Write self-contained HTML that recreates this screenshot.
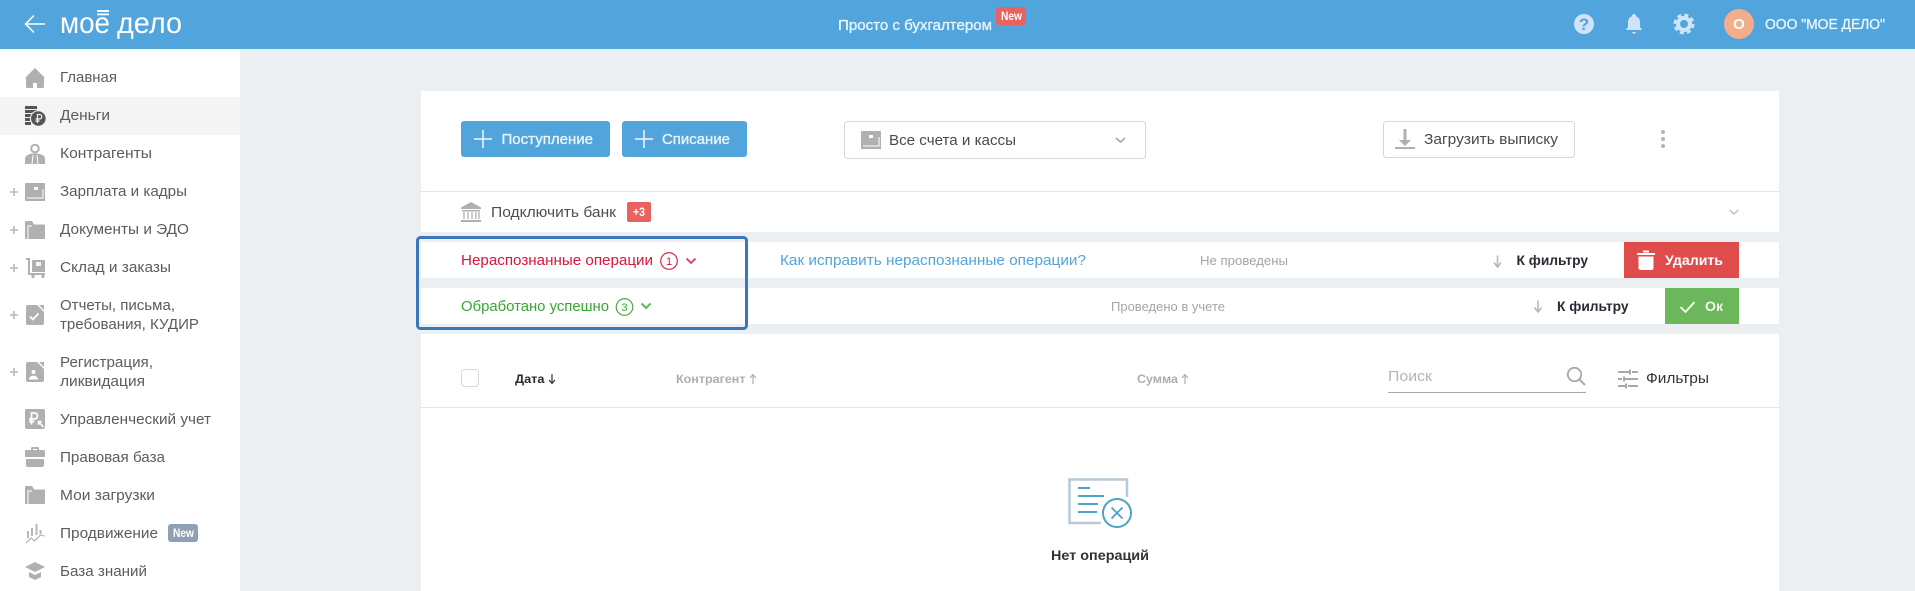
<!DOCTYPE html>
<html lang="ru"><head><meta charset="utf-8"><title>Деньги</title>
<style>
html,body{margin:0;padding:0;width:1915px;height:591px;overflow:hidden;background:#ebeff2}
svg{display:block}
text{font-family:"Liberation Sans",sans-serif;font-size:15px}
.m{fill:#5c5c5c}
.b{font-weight:bold}
.h{fill:#e9f4fb;stroke:#e9f4fb;stroke-width:.35}
.ic{fill:#b0b0b0}
</style></head><body>
<svg width="1915" height="591" viewBox="0 0 1915 591" xmlns="http://www.w3.org/2000/svg">
<!-- backgrounds -->
<rect width="1915" height="591" fill="#ebeff2"/>
<rect x="0" y="49" width="240" height="542" fill="#fff"/>
<rect x="0" y="97" width="240" height="38" fill="#f4f4f4"/>
<rect x="0" y="0" width="1915" height="49" fill="#52a5dc"/>

<!-- header -->
<g fill="none" stroke="#fff" stroke-width="1.500"><path d="M26 24H45M34 15.500L25.500 24L34 32.500"/></g>
<text x="60" y="33" style="font-size:30px" fill="#fff" textLength="50" lengthAdjust="spacingAndGlyphs">мое</text>
<text x="117" y="33" style="font-size:30px" fill="#fff" textLength="65" lengthAdjust="spacingAndGlyphs">дело</text>
<rect x="97" y="10" width="12" height="2" fill="#fff"/><rect x="97" y="13.500" width="12" height="1.800" fill="#fff"/>
<text x="838" y="30" class="h" textLength="154" lengthAdjust="spacingAndGlyphs">Просто с бухгалтером</text>
<rect x="996" y="7" width="30" height="18" rx="3" fill="#e9625f"/>
<text x="1001" y="20" class="b" style="font-size:12px" fill="#fff" textLength="21" lengthAdjust="spacingAndGlyphs">New</text>
<circle cx="1584" cy="24" r="10" fill="#cfe4f6"/>
<text x="1584" y="30" class="b" style="font-size:17px" fill="#52a5dc" text-anchor="middle">?</text>
<path d="M1634 14a2 2 0 0 1 2 2.200c3 1 4 3.600 4 6.300v4.500l2 2.500v.5h-16v-.5l2-2.500v-4.500c0-2.700 1-5.300 4-6.300a2 2 0 0 1 2-2.200zM1631.500 32h5l-2.500 2z" fill="#cfe4f6"/>
<g fill="none" stroke="#cfe4f6"><circle cx="1684" cy="24" r="6" stroke-width="4"/><circle cx="1684" cy="24" r="9" stroke-width="3" stroke-dasharray="4 3.070"/></g>
<circle cx="1739" cy="24" r="15" fill="#f2ae8b"/>
<text x="1739" y="29" class="b" fill="#fff" text-anchor="middle">О</text>
<text x="1765" y="29" class="h" textLength="120" lengthAdjust="spacingAndGlyphs">ООО "МОЕ ДЕЛО"</text>

<!-- sidebar text -->
<text x="60" y="82" class="m" textLength="57" lengthAdjust="spacingAndGlyphs">Главная</text>
<text x="60" y="120" class="m" textLength="50" lengthAdjust="spacingAndGlyphs">Деньги</text>
<text x="60" y="158" class="m" textLength="92" lengthAdjust="spacingAndGlyphs">Контрагенты</text>
<text x="60" y="196" class="m" textLength="127" lengthAdjust="spacingAndGlyphs">Зарплата и кадры</text>
<text x="60" y="234" class="m" textLength="129" lengthAdjust="spacingAndGlyphs">Документы и ЭДО</text>
<text x="60" y="272" class="m" textLength="111" lengthAdjust="spacingAndGlyphs">Склад и заказы</text>
<text x="60" y="310" class="m" textLength="115" lengthAdjust="spacingAndGlyphs">Отчеты, письма,</text>
<text x="60" y="329" class="m" textLength="139" lengthAdjust="spacingAndGlyphs">требования, КУДИР</text>
<text x="60" y="367" class="m" textLength="93" lengthAdjust="spacingAndGlyphs">Регистрация,</text>
<text x="60" y="386" class="m" textLength="85" lengthAdjust="spacingAndGlyphs">ликвидация</text>
<text x="60" y="424" class="m" textLength="151" lengthAdjust="spacingAndGlyphs">Управленческий учет</text>
<text x="60" y="462" class="m" textLength="105" lengthAdjust="spacingAndGlyphs">Правовая база</text>
<text x="60" y="500" class="m" textLength="95" lengthAdjust="spacingAndGlyphs">Мои загрузки</text>
<text x="60" y="538" class="m" textLength="98" lengthAdjust="spacingAndGlyphs">Продвижение</text>
<rect x="168" y="524" width="30" height="18" rx="3" fill="#8fa0b5"/>
<text x="173" y="537" class="b" style="font-size:11.500px" fill="#fff" textLength="21" lengthAdjust="spacingAndGlyphs">New</text>
<text x="60" y="576" class="m" textLength="87" lengthAdjust="spacingAndGlyphs">База знаний</text>

<!-- sidebar plus marks -->
<g stroke="#b8b8b8" stroke-width="1.600"><path d="M10 192h8M14 188v8M10 230h8M14 226v8M10 268h8M14 264v8M10 315h8M14 311v8M10 372h8M14 368v8"/></g>

<!-- sidebar icons -->
<path class="ic" d="M35 68L45 78H44V86.500a1.500 1.500 0 0 1-1.500 1.500H37V83H33V88H27.500A1.500 1.500 0 0 1 26 86.500V78H25z"/>
<g fill="#555"><rect x="25" y="106" width="12" height="3"/><rect x="25" y="110" width="12" height="3"/><rect x="25" y="114" width="7" height="3"/><rect x="25" y="118" width="5" height="3"/><rect x="25" y="122" width="6" height="3"/>
<circle cx="38.300" cy="118.500" r="7.800" stroke="#f4f4f4" stroke-width="1"/></g>
<path d="M37.500 123V114.500h2a2.200 2.200 0 0 1 0 4.500H35.500M35.500 121h4" fill="none" stroke="#f4f4f4" stroke-width="1.200"/>
<circle cx="35" cy="148.500" r="3.800" fill="none" stroke="#b0b0b0" stroke-width="2"/>
<path class="ic" d="M25 164V159c0-3.500 3.500-4.800 7.500-5.500H37.500c4 .7 7.500 2 7.500 5.500v5z"/>
<path d="M35 155v0M33 155l-1 9M37 155l1 9" stroke="#fff" stroke-width="1" fill="none"/>
<path class="ic" fill-rule="evenodd" d="M26 183H44a1 1 0 0 1 1 1V201H26a1 1 0 0 1-1-1V184a1 1 0 0 1 1-1z"/>
<path d="M27 198H43V189" fill="none" stroke="#fff" stroke-width="1"/>
<rect x="34" y="187" width="4" height="3" fill="#fff" opacity=".9"/>
<path class="ic" d="M25 222a1 1 0 0 1 1-1h6l2 3.500h10a1 1 0 0 1 1 1v12.500a1 1 0 0 1-1 1H26a1 1 0 0 1-1-1z"/>
<path d="M28 239V226H32" fill="none" stroke="#fff" stroke-width="1"/>
<path class="ic" d="M26 258h4v15h15v2H28v-15h-2z"/>
<path class="ic" d="M32 260h13v12H32z"/><rect x="36" y="262" width="5" height="4" fill="#fff" opacity=".9"/>
<circle cx="33" cy="276.500" r="1.600" fill="#b0b0b0"/><circle cx="43" cy="276.500" r="1.600" fill="#b0b0b0"/>
<path class="ic" d="M28 305h9l7 7V323a2 2 0 0 1-2 2H28a2 2 0 0 1-2-2V307a2 2 0 0 1 2-2z"/>
<path class="ic" d="M39 305l5 5v-5z"/>
<path d="M30 316.500l3 3 5.500-6" fill="none" stroke="#fff" stroke-width="1.800"/>
<path class="ic" d="M28 362h9l7 7V380a2 2 0 0 1-2 2H28a2 2 0 0 1-2-2V364a2 2 0 0 1 2-2z"/>
<path class="ic" d="M39 362l5 5v-5z"/>
<circle cx="33.500" cy="372" r="2" fill="#fff"/><path d="M29 379.500c0-2.500 2-3.800 4.500-3.800s4.500 1.300 4.500 3.800z" fill="#fff"/>
<rect class="ic" x="25" y="409" width="20" height="20" rx="2"/>
<path d="M31.500 424.500V413h3a3 3 0 0 1 0 6H29M29 421.500h5.500" fill="none" stroke="#fff" stroke-width="1.800"/>
<path d="M38.500 421.500l5 5.500M38.500 425v-3.500h3.500" fill="none" stroke="#fff" stroke-width="1.500"/>
<path class="ic" d="M31 450v-1.500a1.500 1.500 0 0 1 1.500-1.500h5a1.500 1.500 0 0 1 1.500 1.500V450h5a1 1 0 0 1 1 1v6H25v-6a1 1 0 0 1 1-1zM33 450h4v-1h-4z"/>
<path class="ic" d="M26 459h18v6a2 2 0 0 1-2 2H28a2 2 0 0 1-2-2z"/>
<path class="ic" d="M25 487a1 1 0 0 1 1-1h6l2 3.500h10a1 1 0 0 1 1 1v12.500a1 1 0 0 1-1 1H26a1 1 0 0 1-1-1z"/>
<path d="M28 504V491H32" fill="none" stroke="#fff" stroke-width="1"/>
<g stroke="#b8b8b8" fill="none"><path stroke-width="2" d="M28 531v7M32 528v8M36.500 524v11M40.500 530v4"/><path stroke-width="1.300" d="M26 543l5-5 3.500 3 6-6 4 1"/></g>
<path class="ic" d="M35 562l10 5-10 5-10-5z"/><path class="ic" d="M29 572l6 3 6-3v5l-6 3-6-3z"/>

<!-- main top panel -->
<rect x="421" y="91" width="1358" height="141" fill="#fff"/>
<rect x="421" y="191" width="1358" height="1" fill="#e3e6e9"/>
<rect x="461" y="121" width="149" height="36" rx="3" fill="#52a5dc"/>
<path d="M474 139h18M483 130v18" stroke="#f2f8fd" stroke-width="1.500"/>
<text x="501.500" y="144" class="h" textLength="91.500" lengthAdjust="spacingAndGlyphs">Поступление</text>
<rect x="622" y="121" width="125" height="36" rx="3" fill="#52a5dc"/>
<path d="M635 139h18M644 130v18" stroke="#f2f8fd" stroke-width="1.500"/>
<text x="662" y="144" class="h" textLength="68" lengthAdjust="spacingAndGlyphs">Списание</text>
<rect x="844.500" y="121.500" width="301" height="37" rx="3" fill="#fff" stroke="#d6d6d6"/>
<path class="ic" d="M862 131h18a1 1 0 0 1 1 1v17h-20V132a1 1 0 0 1 1-1z"/>
<path d="M863 146H879V137" fill="none" stroke="#fff" stroke-width="1"/>
<rect x="869" y="135" width="4" height="3" fill="#fff"/>
<text x="889" y="145" fill="#4a4a4a" textLength="127" lengthAdjust="spacingAndGlyphs">Все счета и кассы</text>
<path d="M1116 138l4.500 4 4.500-4" fill="none" stroke="#a8a8a8" stroke-width="1.600"/>
<rect x="1383.500" y="121.500" width="191" height="36" rx="3" fill="#fff" stroke="#d6d6d6"/>
<path class="ic" d="M1403.500 129h3v11h4.500l-6 6-6-6h4.500z"/><rect x="1395" y="147" width="20" height="2" fill="#b0b0b0"/>
<text x="1424" y="144" fill="#4a4a4a" textLength="134" lengthAdjust="spacingAndGlyphs">Загрузить выписку</text>
<g fill="#b4b4b4"><circle cx="1663" cy="132" r="2"/><circle cx="1663" cy="139" r="2"/><circle cx="1663" cy="146" r="2"/></g>

<!-- bank -->
<path class="ic" d="M471 202l10 5.500v1.500H461v-1.500zM462 210h18v1.500H462zM461 220h20v2H461z"/>
<g stroke="#b0b0b0" stroke-width="1.300"><path d="M464 212v7M468 212v7M472 212v7M476 212v7M479 212v7"/></g>
<text x="491" y="217" fill="#4f4f4f" textLength="125" lengthAdjust="spacingAndGlyphs">Подключить банк</text>
<rect x="627" y="202" width="24" height="20" rx="2" fill="#e9625f"/>
<text x="633" y="216" class="b" style="font-size:12px" fill="#fff" textLength="12" lengthAdjust="spacingAndGlyphs">+3</text>
<path d="M1729.500 210l4.500 4 4.500-4" fill="none" stroke="#c8c8c8" stroke-width="1.600"/>

<!-- row 1 -->
<rect x="421" y="242" width="1358" height="36" fill="#fff"/>
<text x="461" y="265" fill="#dc1439" textLength="192" lengthAdjust="spacingAndGlyphs">Нераспознанные операции</text>
<circle cx="669" cy="261" r="8.300" fill="none" stroke="#dc1439" stroke-width="1.100"/>
<text x="669" y="265" style="font-size:11px" fill="#dc1439" text-anchor="middle">1</text>
<path d="M686.500 258.500l4.500 4.500 4.500-4.500" fill="none" stroke="#e04b6c" stroke-width="2"/>
<text x="780" y="265" fill="#52a5dc" textLength="306" lengthAdjust="spacingAndGlyphs">Как исправить нераспознанные операции?</text>
<text x="1200" y="265" style="font-size:13px" fill="#a5a5a5" textLength="88" lengthAdjust="spacingAndGlyphs">Не проведены</text>
<path d="M1497.500 255.500v11M1494 262.500l3.500 4.500 3.500-4.500" fill="none" stroke="#b4b4b4" stroke-width="1.500"/>
<text x="1516.500" y="265" class="b" style="font-size:14px" fill="#2a2a35" textLength="71.500" lengthAdjust="spacingAndGlyphs">К фильтру</text>
<rect x="1624" y="242" width="115" height="36" fill="#e04b4c"/>
<path fill="#fff" d="M1637 253h18v2h-18zM1643 250.500h6v2h-6zM1638.500 256.500h15V268a2 2 0 0 1-2 2h-11a2 2 0 0 1-2-2z"/>
<text x="1665" y="265" class="b" style="font-size:14px" fill="#fff" textLength="58" lengthAdjust="spacingAndGlyphs">Удалить</text>

<!-- row 2 -->
<rect x="421" y="288" width="1358" height="36" fill="#fff"/>
<text x="461" y="311" fill="#3aa536" textLength="148" lengthAdjust="spacingAndGlyphs">Обработано успешно</text>
<circle cx="624.500" cy="307" r="8.300" fill="none" stroke="#3aa536" stroke-width="1.100"/>
<text x="624.500" y="311" style="font-size:11px" fill="#3aa536" text-anchor="middle">3</text>
<path d="M641.500 303.500l4.500 4.500 4.500-4.500" fill="none" stroke="#5cb85c" stroke-width="2"/>
<text x="1111" y="311" style="font-size:13px" fill="#a5a5a5" textLength="114" lengthAdjust="spacingAndGlyphs">Проведено в учете</text>
<path d="M1538 300.500v11M1534.500 307.500l3.500 4.500 3.500-4.500" fill="none" stroke="#b4b4b4" stroke-width="1.500"/>
<text x="1557" y="311" class="b" style="font-size:14px" fill="#2a2a35" textLength="71.500" lengthAdjust="spacingAndGlyphs">К фильтру</text>
<rect x="1665" y="288" width="74" height="36" fill="#6cb65b"/>
<path d="M1680.500 307l5 5 9-10" fill="none" stroke="#fff" stroke-width="1.800"/>
<text x="1705" y="311" class="b" style="font-size:14px" fill="#f2f9f0" textLength="18" lengthAdjust="spacingAndGlyphs">Ок</text>

<!-- highlight frame -->
<rect x="417.500" y="237.500" width="329" height="91" rx="3" fill="none" stroke="#3b76b8" stroke-width="3"/>

<!-- table panel -->
<rect x="421" y="334" width="1358" height="257" fill="#fff"/>
<rect x="461.500" y="369.500" width="17" height="17" rx="3" fill="#fff" stroke="#d8d8d8"/>
<text x="515" y="383" class="b" style="font-size:12px" fill="#2a2a2a" textLength="29.500" lengthAdjust="spacingAndGlyphs">Дата</text>
<path d="M552 374v9M549 380l3 3.500 3-3.500" fill="none" stroke="#333" stroke-width="1.200"/>
<text x="676" y="383" class="b" style="font-size:12px" fill="#adadad" textLength="69.500" lengthAdjust="spacingAndGlyphs">Контрагент</text>
<path d="M753 384v-9M750 378l3-3.500 3 3.500" fill="none" stroke="#adadad" stroke-width="1.200"/>
<text x="1137" y="383" class="b" style="font-size:12px" fill="#adadad" textLength="41" lengthAdjust="spacingAndGlyphs">Сумма</text>
<path d="M1185 384v-9M1182 378l3-3.500 3 3.500" fill="none" stroke="#adadad" stroke-width="1.200"/>
<text x="1388" y="381" fill="#b5b5b5" textLength="44" lengthAdjust="spacingAndGlyphs">Поиск</text>
<rect x="1388" y="392" width="198" height="1" fill="#a8a8a8"/>
<circle cx="1574.500" cy="374.500" r="6.700" fill="none" stroke="#a8a8a8" stroke-width="1.800"/>
<path d="M1579.500 379.500l5.500 5.500" stroke="#a8a8a8" stroke-width="2"/>
<g stroke="#a8a8a8" stroke-width="2" fill="none"><path d="M1618 372h11M1632 372h6M1630 369.500v5M1618 379h4M1625 379h13M1624 376.500v5M1618 386h7M1628 386h10M1626 383.500v5"/></g>
<text x="1646" y="383" fill="#333" textLength="63" lengthAdjust="spacingAndGlyphs">Фильтры</text>
<rect x="421" y="407" width="1358" height="1" fill="#e3e6e9"/>

<!-- empty state -->
<path d="M1101 523H1069.500V479.500H1127V497" fill="none" stroke="#b9c9d6" stroke-width="2.500"/>
<g stroke="#4da3c8" stroke-width="2"><path d="M1078 488h12M1078 496h26M1078 504h20M1078 512h19"/></g>
<circle cx="1117" cy="513" r="14" fill="#fff" stroke="#4da3c8" stroke-width="2"/>
<path d="M1111.500 507.500l11 11M1122.500 507.500l-11 11" stroke="#4da3c8" stroke-width="1.800"/>
<text x="1051" y="560" class="b" style="font-size:14px" fill="#333" textLength="98" lengthAdjust="spacingAndGlyphs">Нет операций</text>
</svg>
</body></html>
